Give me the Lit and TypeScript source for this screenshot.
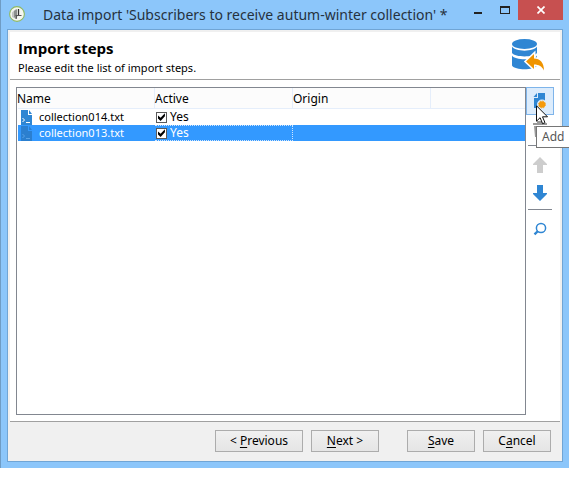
import { LitElement, html, css, svg } from "lit";
import { customElement, state } from "lit/decorators.js";
import { classMap } from "lit/directives/class-map.js";

interface Step {
  name: string;
  active: boolean;
  origin: string;
}

const appIcon = svg`<svg width="16" height="16" viewBox="0 0 16 16">
  <circle cx="8" cy="8" r="7.400" fill="#f4f6f0" stroke="#8db863" stroke-width="1.100"/>
  <path d="M3 6.500 7 3v10l-4-2z" fill="#c3c6c3"/><path d="M5 5l3-2v10l-3-2z" fill="#8c908d"/>
  <path d="M9.500 3v6.500" stroke="#333" stroke-width="1.300"/><path d="M6.500 9.500h6M8 9l-1 4" stroke="#555" fill="none"/></svg>`;

const databaseIcon = svg`<svg width="33" height="33" viewBox="0 0 33 33">
  <ellipse cx="12.500" cy="5" rx="12.500" ry="5" fill="#2f86d3"/>
  <path d="M0 7.500c3 5.500 22 5.500 25 0v6.500c-3 4.500-22 4.500-25 0z" fill="#2f86d3"/>
  <path d="M0 16.500c3 5 22 5 25 0v10c-3 5-22 5-25 0z" fill="#2f86d3"/>
  <path d="M14 22.500 22 15v4.500c6 0 10 4 10 12-2-4-5-6-10-6v4.500z" fill="#ef9400" stroke="#fff" stroke-width="3" paint-order="stroke"/></svg>`;

const fileIcon = svg`<svg width="12" height="15" viewBox="0 0 12 15">
  <path class="sheet" d="M0 0h7v5h4v10H0z"/><path class="sheet" d="M8 0l3 4H8z"/>
  <path class="prompt" d="M1.500 8 3.500 10 1.500 12M5 12.500h4" fill="none"/></svg>`;

const addIcon = svg`<svg width="16" height="18" viewBox="0 0 16 18">
  <path d="M6 1h7v15H2V6h4z" fill="#2f86d3"/><path d="M1.500 5 5 1v4z" fill="#2f86d3"/>
  <circle cx="10" cy="12.500" r="5" fill="#dcecfc"/><circle cx="10" cy="12.500" r="3.200" fill="#f59a0b"/>
  <circle cx="10" cy="12.500" r="3.500" fill="none" stroke="#f59a0b" stroke-dasharray="1.400 1.350"/></svg>`;

const deleteIcon = svg`<svg width="16" height="18" viewBox="0 0 16 18">
  <path d="M5 1h6v2h4v2H1V3h4zM2 6h12l-1 11H3z" fill="#999"/></svg>`;

const arrowIcon = svg`<svg width="14" height="16" viewBox="0 0 14 16">
  <path d="M7 0 14 7v1h-4v8H4V8H0V7z" fill="currentColor"/></svg>`;

const searchIcon = svg`<svg width="14" height="14" viewBox="0 0 14 14" fill="none" stroke="#2f86d3">
  <circle cx="8" cy="6" r="4.600" stroke-width="1.500"/><path d="M5 9 1.500 12.300" stroke-width="2.400"/></svg>`;

const pointer = svg`<svg width="13" height="20" viewBox="0 0 13 20">
  <path d="M.5.8v15.400l3.600-3.500 2.500 6 2.400-1-2.500-5.900h5z" fill="#fff" stroke="#111"/></svg>`;

@customElement("app-root")
export class AppRoot extends LitElement {
  @state() private steps: Step[] = [
    { name: "collection014.txt", active: true, origin: "" },
    { name: "collection013.txt", active: true, origin: "" },
  ];
  @state() private selected = 1;

  static styles = css`
    :host {
      display: flex;
      box-sizing: border-box;
      min-height: 100vh;
      padding: 0 8px 13px 0;
      background: #fff;
      color: #000;
      font: 12px/16px "Noto Sans", "Open Sans", sans-serif;
    }
    * { box-sizing: border-box; }
    svg { display: block; }
    button { font: inherit; color: inherit; padding: 0; margin: 0; }
    .window {
      flex: 1;
      min-width: 0;
      display: flex;
      flex-direction: column;
      padding: 0 6px 6px;
      border-left: 1px solid #6f9cc4;
      background: #8cc6fa;
    }
    .titlebar { display: flex; height: 29px; padding-left: 2px; }
    .app-icon { padding-top: 6px; }
    .title {
      flex: 1;
      min-width: 0;
      margin: 0;
      padding-left: 18px;
      font: 14px/30px "Noto Sans", "Open Sans", sans-serif;
      color: #26323e;
      white-space: nowrap;
    }
    .win-buttons { display: flex; }
    .win-button {
      display: flex;
      justify-content: center;
      width: 27px;
      height: 20px;
      border: 0;
      background: none;
      padding-top: 6px;
    }
    .close { width: 45px; background: #c75050; }
    .frame {
      flex: 1;
      display: flex;
      flex-direction: column;
      padding: 2px;
      border: 1px solid #70a5d5;
      background: #f0f0f0;
    }
    .content { flex: 1; display: flex; flex-direction: column; background: #fff; }
    .heading {
      display: flex;
      justify-content: space-between;
      height: 48px;
      padding: 7px 15px 0 8px;
      border-bottom: 1px solid #a0a0a0;
    }
    h2 { margin: 0; font: bold 15px/18px "Open Sans", sans-serif; }
    p { margin: 3px 0 0; font-size: 11px; }
    .body { flex: 1; display: flex; padding: 7px 6px 6px; }
    .list { flex: 1; border: 1px solid #828790; padding-left: 1px; }
    table { width: 100%; border-collapse: separate; border-spacing: 0; table-layout: fixed; }
    .col-name { width: 137px; }
    .col { width: 138px; }
    th {
      height: 21px;
      padding: 2px 0 0;
      text-align: left;
      font-weight: normal;
      background: #fcfcfc;
      border-bottom: 1px solid #e5eefb;
      border-right: 1px solid #e5eefb;
    }
    th:first-child { text-indent: -1px; }
    th:last-child { border-right: 0; }
    td { height: 16px; padding: 0; line-height: 14px; border: 1px solid transparent; border-left: 0; }
    .cell { display: flex; align-items: center; height: 14px; white-space: nowrap; }
    .file { padding-left: 3px; gap: 6px; font-size: 11px; }
    .sheet { fill: #2f86d3; }
    .prompt { stroke: #fff; stroke-width: 1; }
    .selected td { background: #3399ff; color: #fff; }
    .selected .sheet { fill: #2b7fcf; }
    .selected .prompt { stroke: #5ba3e6; }
    .selected .focus { border: 1px dotted #cfe6ff; border-left-width: 0; }
    label.cell { gap: 3px; padding-left: 1px; }
    input {
      appearance: none;
      width: 11px;
      height: 11px;
      margin: 0;
      border: 1px solid #5a5a5a;
      background: #fff;
      display: grid;
      place-items: center;
    }
    input:checked::before {
      content: "";
      width: 9px;
      height: 9px;
      background: #000;
      clip-path: polygon(11% 32%, 40% 58%, 88% 8%, 88% 42%, 40% 95%, 11% 66%);
    }
    .toolbar { display: flex; flex-direction: column; align-items: center; width: 28px; }
    .tool {
      position: relative;
      display: grid;
      place-items: center;
      width: 28px;
      height: 28px;
      border: 1px solid transparent;
      background: none;
      color: #2f86d3;
    }
    .tool:disabled { color: #cdcdcd; }
    .tool.hover { background: #dcecfc; border-color: #7eb4ea; }
    .down { transform: rotate(180deg); }
    .rule { width: 24px; height: 1px; margin: 2px 0 5px; border: 0; background: #828790; }
    .tip {
      position: absolute;
      z-index: 1;
      left: 9px;
      top: 38px;
      width: 33px;
      height: 22px;
      padding-left: 5px;
      border: 1px solid #767676;
      border-right: 0;
      background: #fff;
      color: #575757;
      line-height: 20px;
      text-align: left;
    }
    .pointer { position: absolute; z-index: 2; left: 9px; top: 17px; }
    .footer {
      display: flex;
      justify-content: flex-end;
      gap: 8px;
      padding: 8px 9px 7px;
      border-top: 1px solid #a0a0a0;
    }
    .push {
      width: 68px;
      height: 22px;
      border: 1px solid #acacac;
      background: linear-gradient(#f0f0f0, #e5e5e5);
    }
    .wide { width: 88px; }
    .gap { margin-left: 20px; }
    u { text-underline-offset: 2px; }
  `;

  private toggle(index: number) {
    this.steps = this.steps.map((s, i) => (i === index ? { ...s, active: !s.active } : s));
  }

  private row(step: Step, i: number) {
    return html`<tr class=${classMap({ selected: i === this.selected })} @click=${() => (this.selected = i)}>
      <td><div class="cell file">${fileIcon}<span>${step.name}</span></div></td>
      <td class="focus">
        <label class="cell"><input type="checkbox" .checked=${step.active} @change=${() => this.toggle(i)} />${step.active ? "Yes" : "No"}</label>
      </td>
      <td>${step.origin}</td>
      <td></td>
    </tr>`;
  }

  render() {
    return html`<main class="window">
      <header class="titlebar">
        <div class="app-icon">${appIcon}</div>
        <h1 class="title">Data import 'Subscribers to receive autum-winter collection' *</h1>
        <div class="win-buttons">
          <button class="win-button" aria-label="Minimize"><svg width="8" height="10"><path d="M0 6h8v2H0z" fill="#222" /></svg></button>
          <button class="win-button" aria-label="Maximize"><svg width="10" height="8"><path d="M0 0h10v8H0zM1 2v5h8V2z" fill="#222" fill-rule="evenodd" /></svg></button>
          <button class="win-button close" aria-label="Close"><svg width="8" height="8"><path d="M.5.500l7 7M7.500.500l-7 7" stroke="#fff" stroke-width="1.700" /></svg></button>
        </div>
      </header>
      <div class="frame">
        <section class="content">
          <div class="heading">
            <div><h2>Import steps</h2><p>Please edit the list of import steps.</p></div>
            ${databaseIcon}
          </div>
          <div class="body">
            <div class="list">
              <table>
                <colgroup><col class="col-name" /><col class="col" /><col class="col" /><col /></colgroup>
                <thead><tr><th>Name</th><th>Active</th><th>Origin</th><th></th></tr></thead>
                <tbody>${this.steps.map((s, i) => this.row(s, i))}</tbody>
              </table>
            </div>
            <div class="toolbar">
              <button class="tool hover" aria-label="Add">${addIcon}<span class="tip">Add</span><span class="pointer">${pointer}</span></button>
              <button class="tool" aria-label="Delete">${deleteIcon}</button>
              <hr class="rule" />
              <button class="tool" aria-label="Move up" disabled>${arrowIcon}</button>
              <button class="tool" aria-label="Move down"><span class="down">${arrowIcon}</span></button>
              <hr class="rule" />
              <button class="tool" aria-label="Search">${searchIcon}</button>
            </div>
          </div>
        </section>
        <footer class="footer">
          <button class="push wide">&lt; <u>P</u>revious</button>
          <button class="push"><u>N</u>ext &gt;</button>
          <button class="push gap"><u>S</u>ave</button>
          <button class="push">C<u>a</u>ncel</button>
        </footer>
      </div>
    </main>`;
  }
}
